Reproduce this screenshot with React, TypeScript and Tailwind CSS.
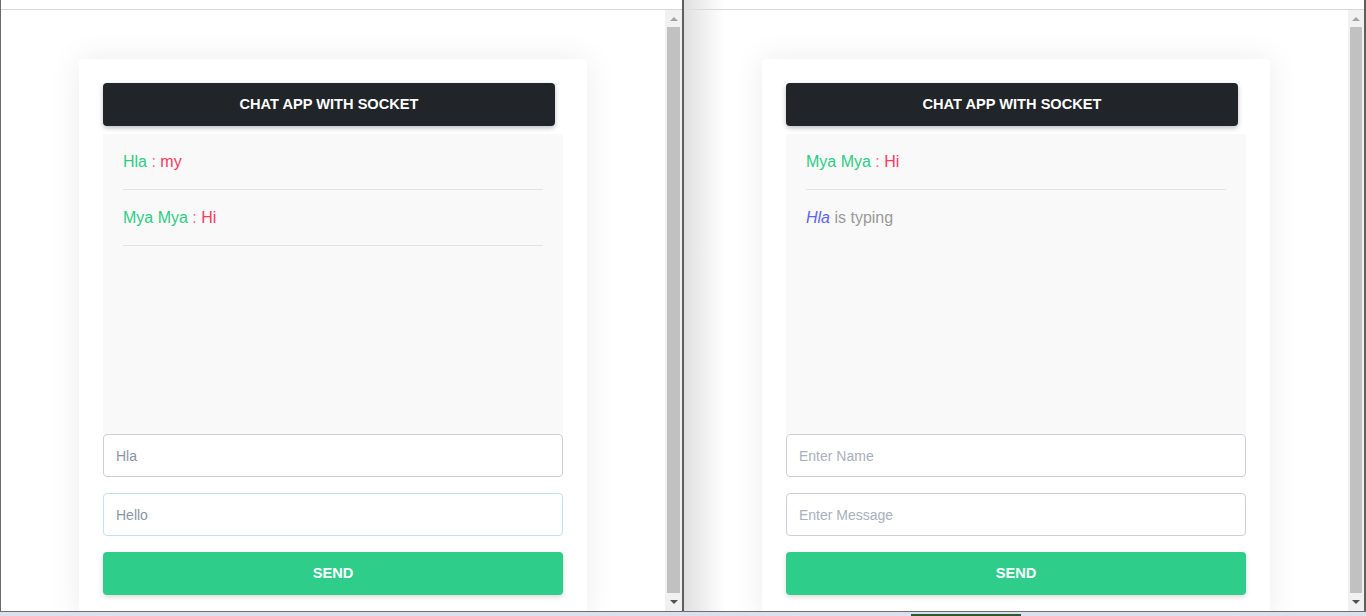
import React from 'react';

type Msg = { name: string; text: string };

const font = "font-['Liberation_Sans',Arial,sans-serif]";

const Scrollbar = ({ w }: { w: string }) => (
  <div className={`${w} h-full bg-[#f1f1f1] flex flex-col`}>
    <div className="h-[17px] flex items-center justify-center">
      <div className="w-0 h-0 border-l-[4px] border-r-[4px] border-b-[4px] border-l-transparent border-r-transparent border-b-[#a3a3a3]" />
    </div>
    <div className="flex-1 mx-[2px] bg-[#c1c1c1]" />
    <div className="h-[18px] flex items-center justify-center">
      <div className="w-0 h-0 border-l-[4px] border-r-[4px] border-t-[4px] border-l-transparent border-r-transparent border-t-[#505050]" />
    </div>
  </div>
);

const MessageRow = ({ m }: { m: Msg }) => (
  <div className="py-[18px] border-b border-[#e4e4e4] text-[16px] leading-[19px]">
    <span className="text-[#2ecc85]">{m.name}</span>
    <span className="text-[#ff6a80]"> : </span>
    <span className="text-[#ff3860]">{m.text}</span>
  </div>
);

const ChatCard = ({ messages, typing, name, message, focusMsg }: {
  messages: Msg[]; typing?: string; name: string; message: string; focusMsg?: boolean;
}) => (
  <div className="w-[508px] mx-auto bg-white rounded-[4px] p-6 shadow-[0_0_32px_rgba(0,0,0,0.08)]">
    <div className="w-[452px] h-[43px] bg-[#212529] rounded-[4px] flex items-center justify-center shadow-[0_2px_5px_rgba(0,0,0,0.25)]">
      <span className="text-white font-bold text-[14.6px] uppercase">Chat App with Socket</span>
    </div>
    <div className="mt-2 h-[300px] bg-[#f9f9f9] px-5">
      {messages.map((m, i) => <MessageRow key={i} m={m} />)}
      {typing && (
        <div className="py-[18px] text-[16px] leading-[19px] text-[#9a9a9a]">
          <i className="text-[#5f63f2]">{typing}</i> is typing
        </div>
      )}
    </div>
    <input
      readOnly
      defaultValue={name}
      placeholder="Enter Name"
      className="block w-full h-[43px] border border-[#cbced3] rounded-[4px] px-3 text-[14px] text-[#8b95a6] placeholder:text-[#a9b0bc] outline-none"
    />
    <input
      readOnly
      defaultValue={message}
      placeholder="Enter Message"
      className={`block w-full h-[43px] mt-4 border ${focusMsg ? 'border-[#c4e0f3]' : 'border-[#cbced3]'} rounded-[4px] px-3 text-[14px] text-[#8b95a6] placeholder:text-[#a9b0bc] outline-none`}
    />
    <button className="w-full h-[43px] mt-4 bg-[#2ecd8a] rounded-[4px] text-white font-bold text-[14.6px] shadow-[0_2px_5px_rgba(0,0,0,0.15)]">
      SEND
    </button>
  </div>
);

const Window = ({ children, bar, shade }: { children: React.ReactNode; bar: string; shade?: boolean }) => (
  <div className="relative flex-1 flex flex-col">
    <div className="h-[10px] border-b border-[#d6d6d6] bg-white" />
    <div className="flex flex-1 min-h-0">
      <div className="flex-1 overflow-hidden pt-[49px]">{children}</div>
      <Scrollbar w={bar} />
    </div>
    {shade && <div className="absolute left-0 top-0 bottom-0 w-[40px] bg-gradient-to-r from-[#e0e0e0] to-transparent pointer-events-none" />}
  </div>
);

export default function App() {
  return (
    <div className={`w-[1366px] h-[616px] flex flex-col bg-white overflow-hidden ${font}`}>
      <div className="flex h-[611px]">
        <div className="w-px bg-[#6b6b6b]" />
        <div className="w-[681px] flex">
          <Window bar="w-[17px]">
            <ChatCard
              messages={[{ name: 'Hla', text: 'my' }, { name: 'Mya Mya', text: 'Hi' }]}
              name="Hla"
              message="Hello"
              focusMsg
            />
          </Window>
        </div>
        <div className="w-[2px] bg-[#5e5e5e]" />
        <div className="w-[680px] flex">
          <Window bar="w-[16px]" shade>
            <ChatCard
              messages={[{ name: 'Mya Mya', text: 'Hi' }]}
              typing="Hla"
              name=""
              message=""
            />
          </Window>
        </div>
        <div className="w-[2px] bg-[#5e5e5e]" />
      </div>
      <div className="h-px bg-[#6e6e6e]" />
      <div className="flex-1 bg-[#d9e1ee] relative">
        <div className="absolute left-[911px] top-[2px] w-[110px] h-[3px] bg-[#2f5a31]" />
      </div>
    </div>
  );
}
